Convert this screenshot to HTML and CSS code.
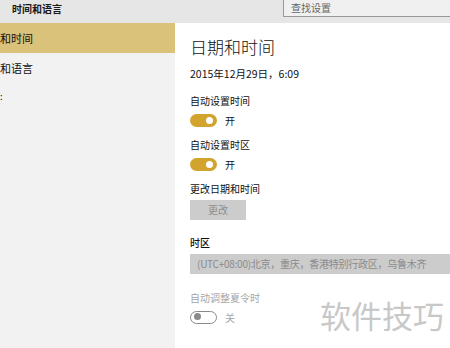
FILE: index.html
```html
<!DOCTYPE html>
<html lang="zh">
<head>
<meta charset="utf-8">
<link rel="stylesheet" href="styles.css">
</head>
<body>
<div class="topbar">
  <div class="apptitle">时间和语言</div>
  <div class="search">查找设置</div>
</div>
<div class="main">
  <nav class="sidebar">
    <div class="navitem selected">和时间</div>
    <div class="navitem">和语言</div>
    <div class="navitem small">:</div>
  </nav>
  <section class="content">
    <h1 class="title">日期和时间</h1>
    <div class="date">2015年12月29日，6:09</div>

    <div class="label">自动设置时间</div>
    <div class="toggle-row">
      <span class="toggle on"><span class="knob"></span></span>
      <span class="state">开</span>
    </div>

    <div class="label l2">自动设置时区</div>
    <div class="toggle-row">
      <span class="toggle on"><span class="knob"></span></span>
      <span class="state">开</span>
    </div>

    <div class="label l3">更改日期和时间</div>
    <div class="button">更改</div>

    <div class="label zone">时区</div>
    <div class="select">(UTC+08:00)北京，重庆，香港特别行政区，乌鲁木齐</div>

    <div class="label disabled">自动调整夏令时</div>
    <div class="toggle-row">
      <span class="toggle off"><span class="knob"></span></span>
      <span class="state disabled">关</span>
    </div>
    <div class="watermark">软件技巧</div>
  </section>
</div>
</body>
</html>
```

FILE: styles.css
```css
* { box-sizing: border-box; }
html, body {
  margin: 0;
  padding: 0;
  width: 450px;
  height: 348px;
  overflow: hidden;
  background: #ffffff;
  font-family: "Noto Sans CJK SC", "Noto Sans", sans-serif;
  color: #000;
}
.topbar {
  height: 23px;
  background: #e6e6e6;
  display: flex;
  align-items: flex-start;
}
.apptitle {
  margin-left: 12px;
  font-size: 10px;
  font-weight: bold;
  line-height: 18px;
  width: 271px;
  color: #1a1a1a;
}
.search {
  flex: 1;
  height: 17px;
  border: 1px solid #999;
  border-top: none;
  border-right: none;
  background: #f0f0f0;
  font-size: 10px;
  line-height: 15px;
  padding-left: 7px;
  color: #666;
}
.main {
  display: flex;
  height: 325px;
}
.sidebar {
  width: 175px;
  background: #f2f2f2;
  flex: none;
}
.navitem {
  height: 31px;
  line-height: 31px;
  font-size: 11px;
  color: #111;
}
.navitem.selected {
  height: 30px;
  line-height: 30px;
  background: #dbc27a;
}
.navitem.small {
  font-size: 9px;
  line-height: 26px;
}
.content {
  flex: 1;
  padding-left: 15px;
  position: relative;
}
.title {
  margin: 12px 0 0 0;
  font-size: 17px;
  font-weight: 300;
  line-height: 24px;
  color: #111;
}
.date {
  margin-top: 8px;
  font-size: 10.5px;
  line-height: 14px;
  color: #111;
}
.label {
  font-size: 10px;
  line-height: 14px;
  margin-top: 13px;
  color: #111;
}
.label.l2, .label.l3 { margin-top: 11px; }
.label.zone { margin-top: 16px; font-weight: 500; }
.label.disabled, .state.disabled { color: #a6a6a6; }
.label.disabled { margin-top: 17px; }
.toggle-row {
  display: flex;
  align-items: center;
  margin-top: 5px;
  height: 14px;
}
.toggle {
  width: 27px;
  height: 13px;
  border-radius: 7px;
  position: relative;
  flex: none;
}
.toggle.on { background: #d2a42e; }
.toggle.off { border: 1.5px solid #8a8a8a; background: #fff; }
.knob {
  position: absolute;
  width: 7px;
  height: 7px;
  border-radius: 50%;
  top: 3px;
}
.toggle.on .knob { background: #fff; right: 4px; }
.toggle.off .knob { background: #8a8a8a; left: 3px; top: 1.5px; }
.state {
  margin-left: 8px;
  font-size: 10px;
  color: #111;
}
.button {
  margin-top: 4px;
  width: 56px;
  height: 20px;
  background: #cccccc;
  color: #8c8c8c;
  font-size: 10px;
  line-height: 20px;
  text-align: center;
}
.select {
  margin-top: 4px;
  height: 20px;
  background: #cccccc;
  color: #8a8a8a;
  font-size: 10px;
  letter-spacing: -0.25px;
  line-height: 20px;
  padding-left: 7px;
  white-space: nowrap;
}
.watermark {
  position: absolute;
  left: 145px;
  top: 273px;
  font-size: 31px;
  line-height: 38px;
  color: #c8c8c8;
  white-space: nowrap;
}
```
